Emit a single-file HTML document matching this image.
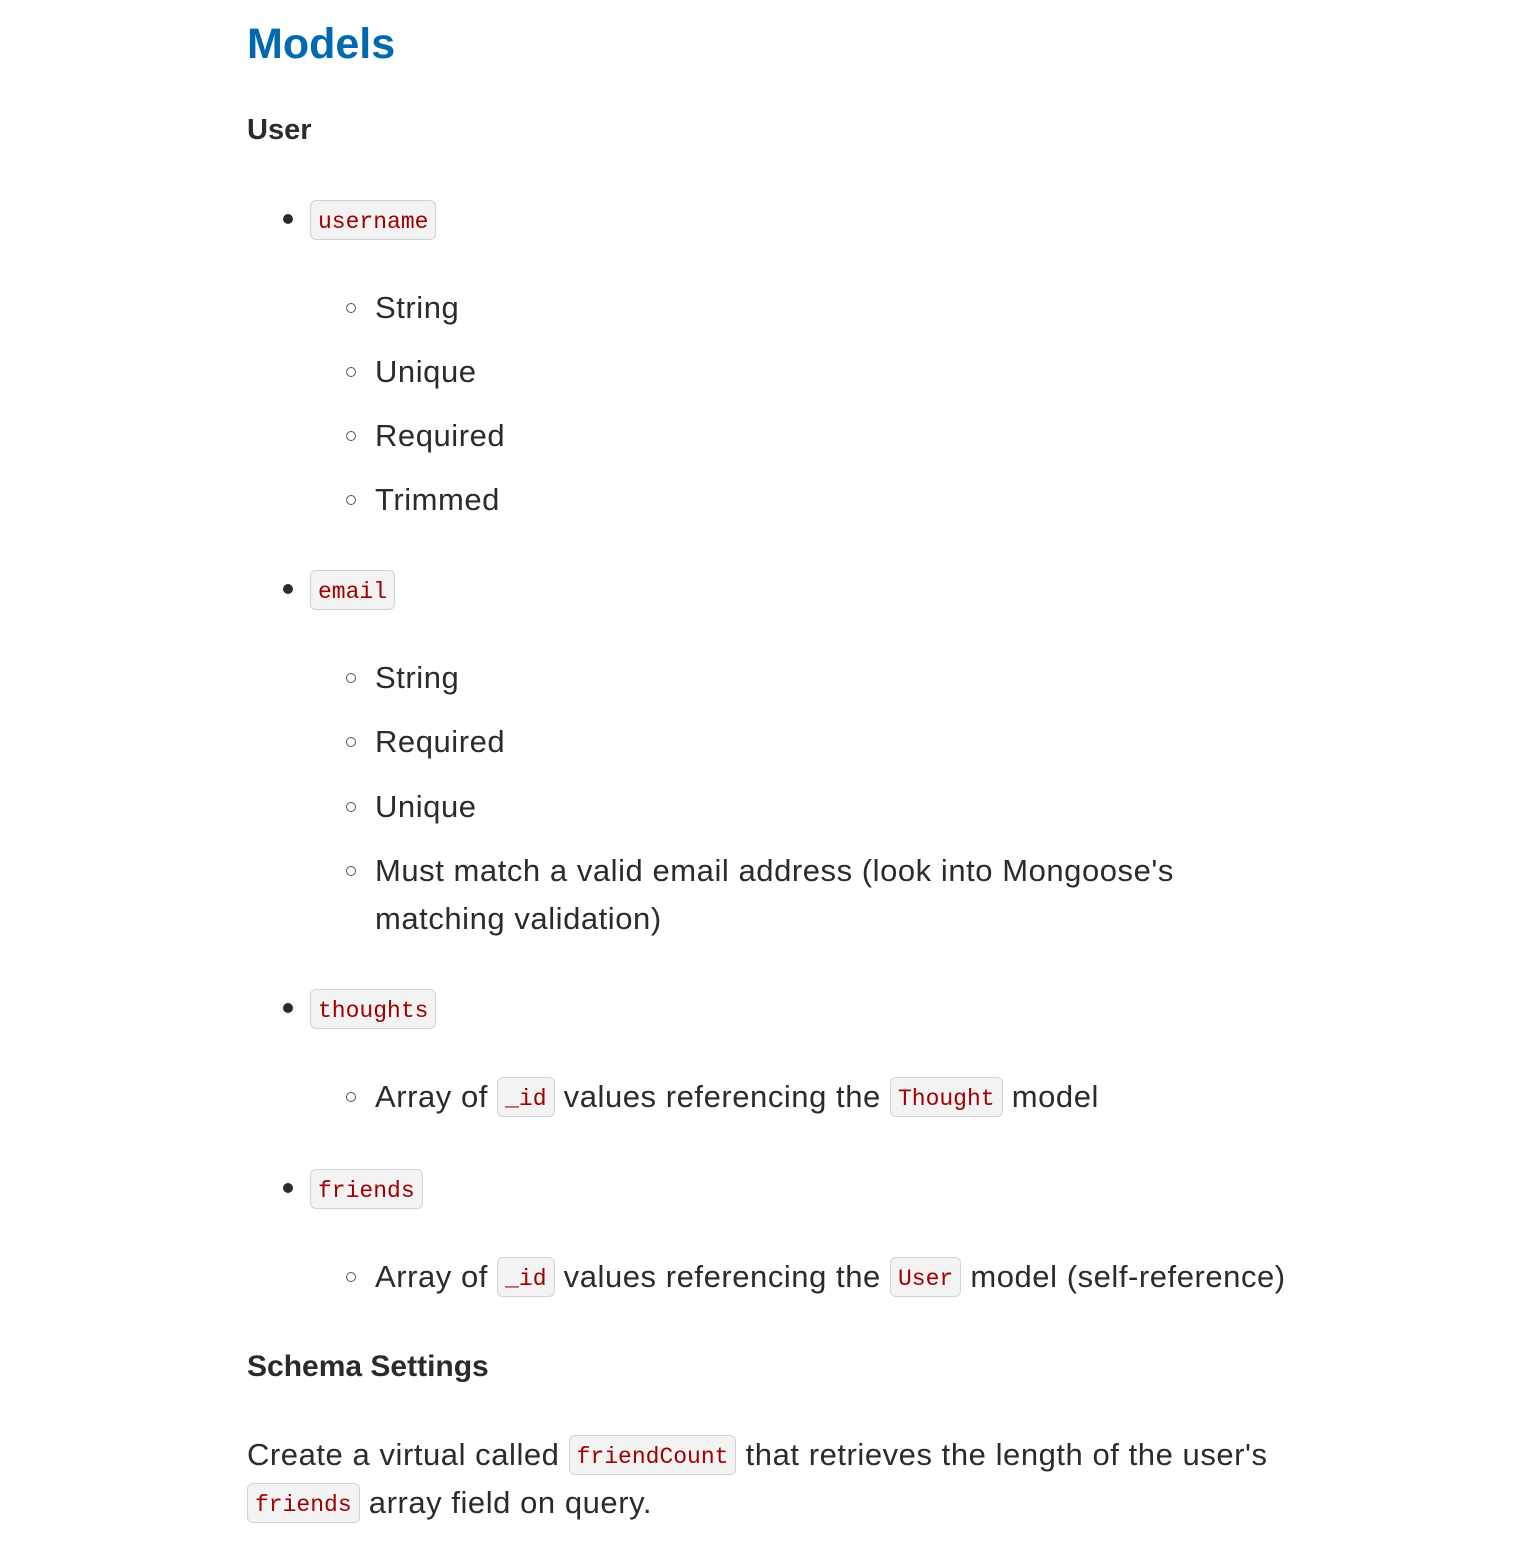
<!DOCTYPE html>
<html><head><meta charset="utf-8"><style>
html,body{margin:0;padding:0;background:#fff;width:1530px;height:1564px;overflow:hidden}
body{position:relative;font-family:"Liberation Sans",sans-serif;color:#2b2b2b}
.l{position:absolute;height:48px;line-height:48px;font-size:31px;letter-spacing:0.55px;white-space:nowrap}
code{font-family:"Liberation Mono",monospace;font-size:23px;letter-spacing:0;color:#a00000;background:#f3f3f3;border:1px solid #d0d3d6;border-radius:6px;padding:0 7px;display:inline-block;height:40px;line-height:42px;vertical-align:middle;box-sizing:border-box;position:relative;top:-2px}
.h1{position:absolute;left:247px;top:14px;font-size:43px;font-weight:bold;color:#0069b0;line-height:60px}
.h3{position:absolute;left:247px;font-size:29px;font-weight:bold;line-height:40px}
.b{position:absolute;width:10px;height:10px;border-radius:50%;background:#2b2b2b;left:283px}
.c{position:absolute;width:8px;height:8px;border-radius:50%;border:1.5px solid #555;left:346px}
</style></head><body>
<div class="h1">Models</div>
<div class="h3" style="top:110px">User</div>

<div class="b" style="top:214px"></div><div class="l" style="left:310px;top:196px"><code>username</code></div>
<div class="c" style="top:303px"></div><div class="l" style="left:375px;top:284px">String</div>
<div class="c" style="top:367px"></div><div class="l" style="left:375px;top:348px">Unique</div>
<div class="c" style="top:431px"></div><div class="l" style="left:375px;top:412px">Required</div>
<div class="c" style="top:495px"></div><div class="l" style="left:375px;top:476px">Trimmed</div>

<div class="b" style="top:584px"></div><div class="l" style="left:310px;top:566px"><code>email</code></div>
<div class="c" style="top:673px"></div><div class="l" style="left:375px;top:654px">String</div>
<div class="c" style="top:737px"></div><div class="l" style="left:375px;top:718px">Required</div>
<div class="c" style="top:802px"></div><div class="l" style="left:375px;top:783px">Unique</div>
<div class="c" style="top:866px"></div><div class="l" style="left:375px;top:847px">Must match a valid email address (look into Mongoose's</div>
<div class="l" style="left:375px;top:895px">matching validation)</div>

<div class="b" style="top:1003px"></div><div class="l" style="left:310px;top:985px"><code>thoughts</code></div>
<div class="c" style="top:1092px"></div><div class="l" style="left:375px;top:1073px">Array of <code>_id</code> values referencing the <code>Thought</code> model</div>

<div class="b" style="top:1183px"></div><div class="l" style="left:310px;top:1165px"><code>friends</code></div>
<div class="c" style="top:1272px"></div><div class="l" style="left:375px;top:1253px">Array of <code>_id</code> values referencing the <code>User</code> model (self-reference)</div>

<div class="h3" style="top:1347px;font-size:30px">Schema Settings</div>
<div class="l" style="left:247px;top:1431px">Create a virtual called <code>friendCount</code> that retrieves the length of the user's</div>
<div class="l" style="left:247px;top:1479px"><code>friends</code> array field on query.</div>
</body></html>
